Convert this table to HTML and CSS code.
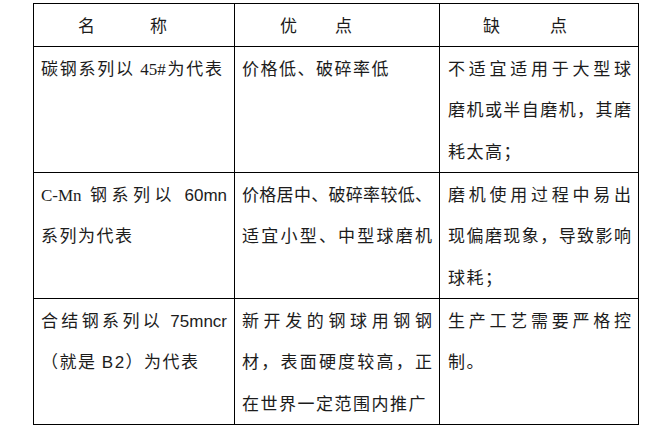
FILE: index.html
```html
<!DOCTYPE html>
<html lang="zh-CN">
<head>
<meta charset="utf-8">
<title>钢球材料对比</title>
<link rel="stylesheet" href="styles.css">
</head>
<body>
<table class="cmp">
  <colgroup>
    <col class="c1"><col class="c2"><col class="c3">
  </colgroup>
  <thead>
    <tr>
      <th class="h1"><span>名</span><span class="h-gap1">称</span></th>
      <th class="h2"><span>优</span><span class="h-gap2">点</span></th>
      <th class="h3"><span>缺</span><span class="h-gap3">点</span></th>
    </tr>
  </thead>
  <tbody>
    <tr>
      <td>
        <div class="ln j short">碳钢系列以 <span class="serif">45#</span>为代表</div>
      </td>
      <td>
        <div class="ln">价格低、破碎率低</div>
      </td>
      <td>
        <div class="ln j">不适宜适用于大型球</div>
        <div class="ln j">磨机或半自磨机，其磨</div>
        <div class="ln">耗太高；</div>
      </td>
    </tr>
    <tr>
      <td>
        <div class="ln j"><span class="serif">C-Mn</span> 钢系列以 <span class="sans">60mn</span></div>
        <div class="ln">系列为代表</div>
      </td>
      <td>
        <div class="ln j">价格居中、破碎率较低、</div>
        <div class="ln j">适宜小型、中型球磨机</div>
      </td>
      <td>
        <div class="ln j">磨机使用过程中易出</div>
        <div class="ln j">现偏磨现象，导致影响</div>
        <div class="ln">球耗；</div>
      </td>
    </tr>
    <tr>
      <td>
        <div class="ln j">合结钢系列以 <span class="sans">75mncr</span></div>
        <div class="ln">（就是 <span class="sans">B2</span>）为代表</div>
      </td>
      <td>
        <div class="ln j">新开发的钢球用钢钢</div>
        <div class="ln j">材，表面硬度较高，正</div>
        <div class="ln">在世界一定范围内推广</div>
      </td>
      <td>
        <div class="ln j">生产工艺需要严格控</div>
        <div class="ln">制。</div>
      </td>
    </tr>
  </tbody>
</table>
</body>
</html>
```
FILE: styles.css
```css
html, body {
  background: #ffffff;
}
body {
  margin: 3px 0 0 33px;
  font-family: "Noto Sans CJK SC", "Liberation Serif", serif;
  font-size: 17px;
  color: #1c1c1c;
}
.cmp {
  border-collapse: collapse;
  table-layout: fixed;
  width: 605px;
}
.c1 { width: 201px; }
.c2 { width: 205px; }
.c3 { width: 199px; }
.cmp th,
.cmp td {
  border: 1px solid #000000;
  vertical-align: top;
  padding: 0 7px;
  line-height: 41.67px;
  font-weight: normal;
  text-align: left;
}
.cmp td:nth-child(3) {
  padding-left: 8px;
}
.cmp th {
  height: 41.67px;
  white-space: nowrap;
}
.cmp .h1 { padding-left: 44px; }
.cmp .h2 { padding-left: 45px; }
.cmp .h3 { padding-left: 43px; }
.h-gap1 { margin-left: 55px; }
.h-gap2 { margin-left: 38px; }
.h-gap3 { margin-left: 50px; }
.ln {
  white-space: nowrap;
  letter-spacing: 1.5px;
  height: 41.67px;
}
.ln.j {
  letter-spacing: 0;
  text-align: justify;
  text-align-last: justify;
  text-justify: inter-character;
}
.ln.short {
  margin-right: 5px;
}
.serif {
  font-family: "Liberation Serif", serif;
}
.sans {
  font-family: "Liberation Sans", sans-serif;
}
```
